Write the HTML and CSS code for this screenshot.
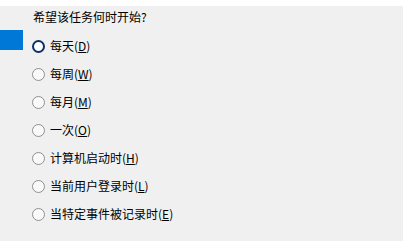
FILE: index.html
```html
<!DOCTYPE html>
<html lang="zh-CN">
<head>
    <meta charset="UTF-8">
    <title>创建基本任务</title>
    <link rel="stylesheet" href="styles.css">
</head>
<body>
    <div class="top-strip"></div>

    <div class="wizard">
        <div class="side">
            <div class="side-mark"></div>
        </div>

        <div class="trigger-form">
            <div class="question">希望该任务何时开始?</div>

            <label class="option">
                <span class="radio checked"></span>
                <span class="option-text">每天(<u>D</u>)</span>
            </label>
            <label class="option">
                <span class="radio"></span>
                <span class="option-text">每周(<u>W</u>)</span>
            </label>
            <label class="option">
                <span class="radio"></span>
                <span class="option-text">每月(<u>M</u>)</span>
            </label>
            <label class="option">
                <span class="radio"></span>
                <span class="option-text">一次(<u>O</u>)</span>
            </label>
            <label class="option">
                <span class="radio"></span>
                <span class="option-text">计算机启动时(<u>H</u>)</span>
            </label>
            <label class="option">
                <span class="radio"></span>
                <span class="option-text">当前用户登录时(<u>L</u>)</span>
            </label>
            <label class="option">
                <span class="radio"></span>
                <span class="option-text">当特定事件被记录时(<u>E</u>)</span>
            </label>
        </div>
    </div>
</body>
</html>
```

FILE: styles.css
```css
/* General */
body {
    margin: 0;
    padding: 0;
    background-color: #f0f0f0;
    color: #000;
    font-family: "Noto Sans CJK SC", "Liberation Sans", sans-serif;
    font-size: 12px;
}

.top-strip {
    height: 6px;
    background-color: #fff;
}

/* Layout */
.wizard {
    display: flex;
}

.side {
    width: 23px;
}

.side-mark {
    margin-top: 24px;
    height: 20px;
    background-color: #0078d7;
}

.trigger-form {
    padding-left: 9px;
}

.question {
    height: 20px;
    line-height: 20px;
    margin-top: 1px;
    margin-bottom: 5px;
    padding-left: 1px;
}

/* Radio options */
.option {
    display: flex;
    align-items: center;
    height: 28px;
    gap: 5px;
}

.radio {
    box-sizing: border-box;
    width: 13px;
    height: 13px;
    border: 1px solid #909090;
    border-radius: 50%;
    background-color: #f9f9f9;
}

.radio.checked {
    border: 2px solid #0e2f66;
    background-color: #fff;
}

.option-text {
    line-height: 16px;
}

.option-text u {
    text-underline-offset: 1px;
}
```
